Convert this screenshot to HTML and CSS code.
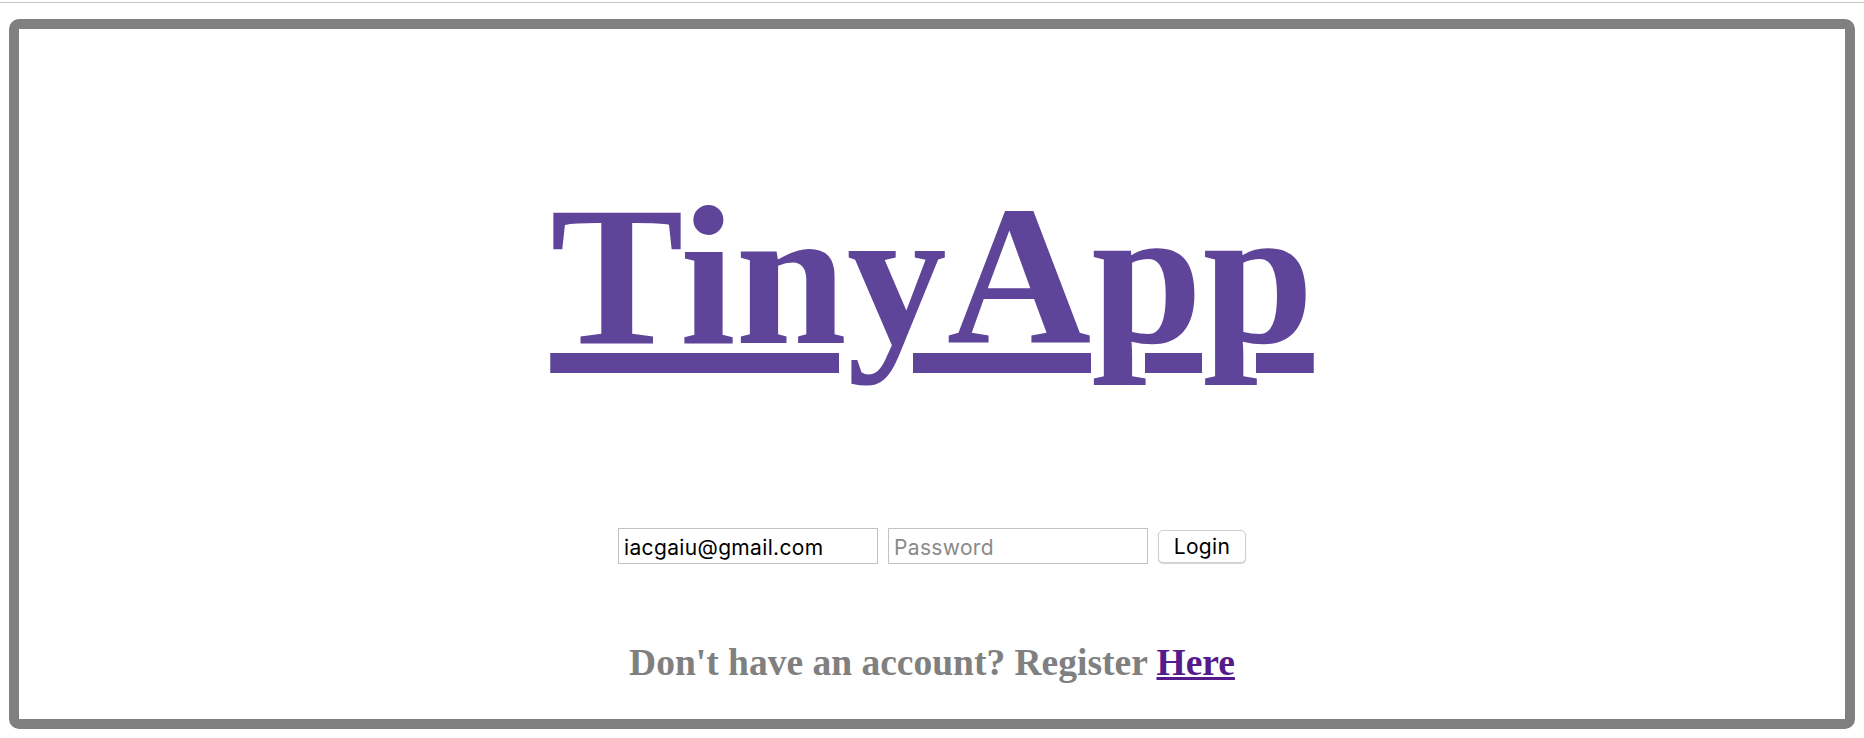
FILE: index.html
```html
<!DOCTYPE html>
<html lang="en">
<head>
<meta charset="utf-8">
<title>TinyApp</title>
<link rel="stylesheet" href="styles.css">
</head>
<body>
<div class="topline"></div>
<main class="frame">
  <h1 class="title"><a class="title-link" href="#">TinyApp</a></h1>
  <form class="login">
    <input class="field" type="text" value="iacgaiu@gmail.com">
    <input class="field" type="password" placeholder="Password">
    <button class="btn" type="button">Login</button>
  </form>
  <h2 class="register">Don't have an account? Register <a class="register-link" href="#">Here</a></h2>
</main>
</body>
</html>
```

FILE: styles.css
```css
html, body {
  margin: 0;
  padding: 0;
  background: #ffffff;
}

body {
  width: 1864px;
  height: 738px;
  overflow: hidden;
  font-family: "Liberation Serif", "Times New Roman", serif;
}

.topline {
  margin-top: 2px;
  height: 1px;
  background: #c4c4c4;
}

.frame {
  box-sizing: border-box;
  margin: 16px 9px 0 9px;
  height: 710px;
  border: 10px solid #808080;
  border-radius: 10px;
  padding-top: 147px;
  display: flex;
  flex-direction: column;
  align-items: center;
}

.title {
  margin: 0;
  font-size: 200px;
  line-height: 200px;
  font-weight: bold;
  font-family: "Liberation Serif", "Times New Roman", serif;
}

.title-link {
  color: #5f4599;
  text-decoration: underline;
  text-decoration-thickness: 20px;
  text-underline-offset: 10px;
}

.login {
  margin: 152px 0 0 0;
  display: flex;
  align-items: center;
  gap: 10px;
}

.field {
  box-sizing: border-box;
  width: 260px;
  height: 36px;
  margin: 0;
  padding: 2px 5px 0 5px;
  border: 1px solid #c2c2c2;
  border-radius: 0;
  font-family: Inter, "Noto Sans", sans-serif;
  font-size: 21px;
  letter-spacing: 0.35px;
  color: #000000;
  background: #ffffff;
  outline: none;
}

.field::placeholder {
  color: #8a8a8a;
}

.btn {
  box-sizing: border-box;
  width: 88px;
  height: 33px;
  margin: 0;
  padding: 0;
  border: 1px solid #cfcfcf;
  border-radius: 5px;
  background: #ffffff;
  box-shadow: 0 1px 1px rgba(0, 0, 0, 0.18);
  font-family: Inter, "Noto Sans", sans-serif;
  font-size: 21px;
  letter-spacing: 0.35px;
  color: #000000;
}

.register {
  margin: 77px 0 0 0;
  font-size: 37.5px;
  line-height: 44px;
  font-weight: bold;
  color: #808080;
  font-family: "Liberation Serif", "Times New Roman", serif;
}

.register-link {
  color: #551a8b;
  text-decoration: underline;
}
```
